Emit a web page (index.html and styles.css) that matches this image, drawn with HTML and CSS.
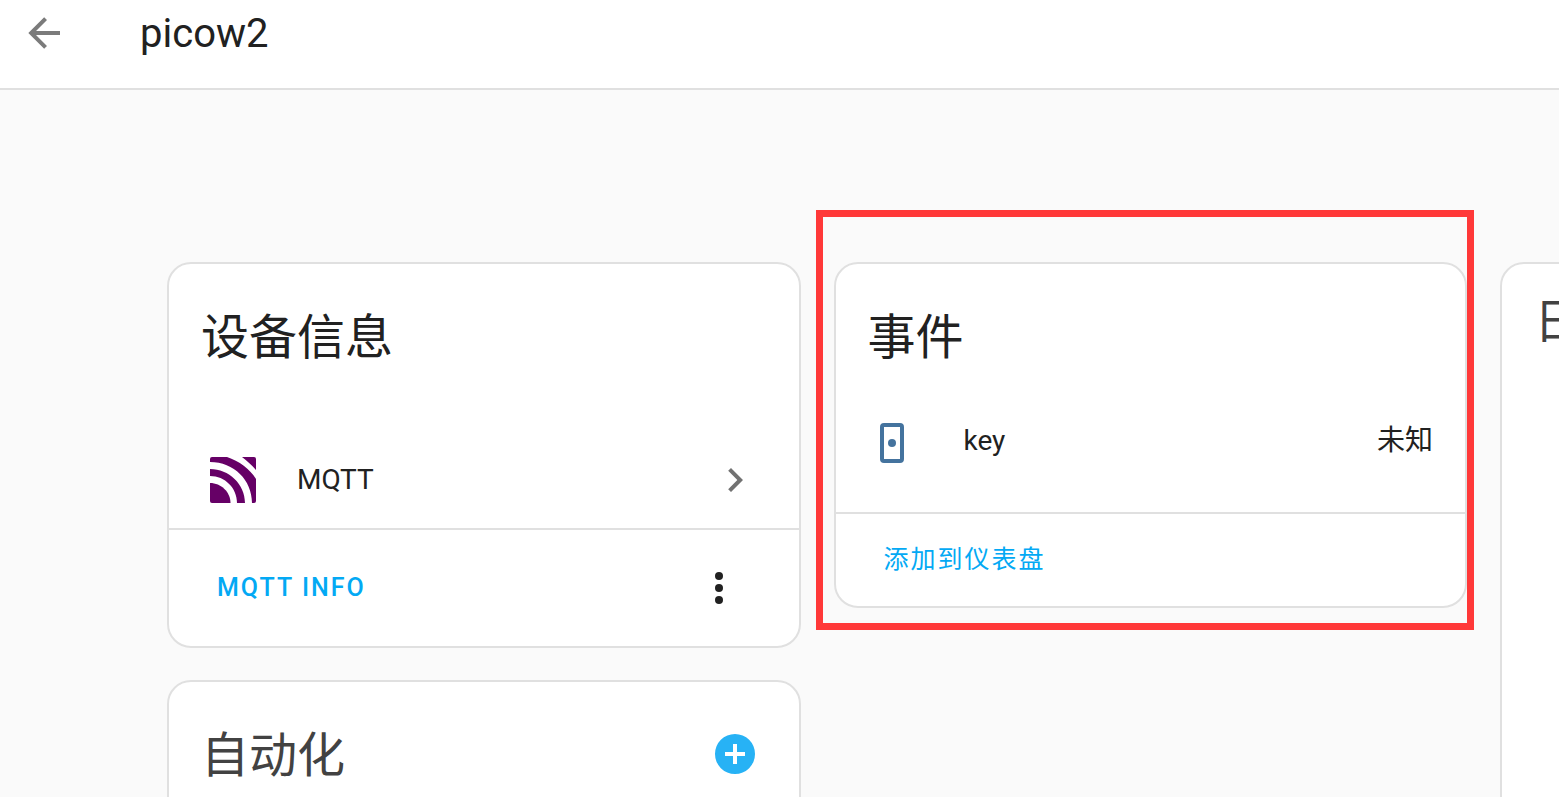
FILE: index.html
```
<!DOCTYPE html>
<html lang="zh-CN">

<head>
    <meta charset="UTF-8">
    <title>picow2</title>
    <link rel="stylesheet" href="styles.css">
</head>

<body>
    <header class="toolbar">
        <button type="button" class="icon-button back" aria-label="返回">
            <svg class="icon" viewBox="0 0 24 24"><path d="M20,11V13H8L13.5,18.5L12.08,19.92L4.16,12L12.08,4.08L13.5,5.5L8,11H20Z"/></svg>
        </button>
        <h1>picow2</h1>
    </header>

    <main class="columns">
        <div class="column">
            <section class="card">
                <h2 class="card-header">设备信息</h2>
                <a class="row integration" href="#mqtt">
                    <svg class="icon" viewBox="-1 -1 48 48">
                        <path fill="#660066" d="M0 26C11 26 20.500 35 20.500 46H2Q0 46 0 44Z"/>
                        <path fill="#660066" d="M0 12C19 12 35 27 35 46H27C27 31 15 19 0 19Z"/>
                        <path fill="#660066" d="M0 5V2Q0 0 2 0H17C29 4 40 12 46 22V44Q46 46 44 46H42C42 23 24 5 0 5Z"/>
                        <path fill="#660066" d="M32 0H44Q46 0 46 2V13C42 8 37 4 32 0Z"/>
                    </svg>
                    <span class="row-name">MQTT</span>
                    <svg class="icon chevron" viewBox="0 0 24 24"><path d="M8.59,16.58L13.17,12L8.59,7.41L10,6L16,12L10,18L8.59,16.58Z"/></svg>
                </a>
                <div class="card-actions info-actions">
                    <button type="button" class="text-button mqtt-info">MQTT INFO</button>
                    <button type="button" class="icon-button" aria-label="菜单">
                        <svg class="icon" viewBox="0 0 24 24"><circle cx="12" cy="6" r="2"/><circle cx="12" cy="12" r="2"/><circle cx="12" cy="18" r="2"/></svg>
                    </button>
                </div>
            </section>

            <section class="card">
                <h2 class="card-header muted">
                    自动化
                    <button type="button" class="icon-button add" aria-label="添加自动化">
                        <svg class="icon" viewBox="0 0 24 24"><path d="M17,13H13V17H11V13H7V11H11V7H13V11H17M12,2A10,10 0 0,0 2,12A10,10 0 0,0 12,22A10,10 0 0,0 22,12A10,10 0 0,0 12,2Z"/></svg>
                    </button>
                </h2>
            </section>
        </div>

        <div class="column">
            <div class="highlight">
                <section class="card">
                    <h2 class="card-header">事件</h2>
                    <div class="row entity">
                        <svg class="icon event" viewBox="0 0 24 24"><rect x="7" y="3" width="10" height="18" rx="1" fill="none" stroke="currentColor" stroke-width="2"/><circle cx="12" cy="12" r="2"/></svg>
                        <span class="row-name">key</span>
                        <span>未知</span>
                    </div>
                    <div class="card-actions">
                        <button type="button" class="text-button">添加到仪表盘</button>
                    </div>
                </section>
            </div>
        </div>

        <div class="column">
            <section class="card logbook">
                <h2 class="card-header muted">日志</h2>
            </section>
        </div>
    </main>
</body>

</html>
```

FILE: styles.css
```
* {
    box-sizing: border-box;
}

body {
    display: flex;
    flex-direction: column;
    height: 100vh;
    margin: 0;
    overflow: hidden;
    background: #fafafa;
    color: #212121;
    font-family: Roboto, "Noto Sans CJK SC", sans-serif;
    font-size: 28px;
}

h1,
h2 {
    margin: 0;
    font-weight: 400;
}

button {
    border: none;
    padding: 0;
    background: none;
    color: inherit;
    font-family: inherit;
    cursor: pointer;
}

.icon {
    display: block;
    flex: none;
    width: 48px;
    height: 48px;
    fill: currentColor;
}

/* top bar */
.toolbar {
    display: flex;
    flex: none;
    align-items: flex-start;
    gap: 72px;
    padding: 9px 20px 29px;
    border-bottom: 2px solid #e0e0e0;
    background: white;
}

.toolbar h1 {
    font-size: 40px;
    line-height: 50px;
}

.back {
    color: #7b7b7b;
}

/* columns of cards */
.columns {
    display: grid;
    flex: 1;
    grid-template-columns: repeat(3, calc(50vw - 146px));
    gap: 33px;
    min-height: 0;
    padding: 172px 0 0 167px;
    overflow: hidden;
}

.column {
    display: flex;
    flex-direction: column;
    gap: 32px;
}

.card {
    flex: none;
    border: 2px solid #e0e0e0;
    border-radius: 24px;
    background: white;
}

.card-header {
    display: flex;
    align-items: flex-end;
    justify-content: space-between;
    padding: 26px 40px 14px 32px;
    font-size: 48px;
    line-height: 96px;
}

.muted {
    color: #424242;
}

.add {
    padding-bottom: 26px;
    color: #27b2f5;
}

.row {
    display: flex;
    align-items: center;
    color: inherit;
    line-height: 40px;
    text-decoration: none;
}

.row-name {
    flex: 1;
}

.integration {
    gap: 40px;
    margin-top: 32px;
    padding: 24px 40px;
}

.chevron {
    color: #727272;
}

.entity {
    align-items: flex-start;
    gap: 48px;
    padding: 19px 32px 45px;
    line-height: 44px;
}

.event {
    color: #44739e;
}

.card-actions {
    display: flex;
    align-items: center;
    justify-content: space-between;
    padding: 10px 48px;
    border-top: 2px solid #e0e0e0;
}

.info-actions {
    padding: 22px 56px 22px 48px;
}

.text-button {
    color: #03a9f4;
    font-size: 25px;
    line-height: 72px;
    letter-spacing: 2px;
}

.mqtt-info {
    font-weight: 500;
}

.logbook {
    flex: 1;
}

.logbook .card-header {
    padding-top: 10px;
}

/* red frame drawn round the event card */
.highlight {
    position: relative;
}

.highlight::after {
    content: "";
    position: absolute;
    inset: -52px -7px -22px -18px;
    border: 7px solid #ff3838;
    pointer-events: none;
}
```
